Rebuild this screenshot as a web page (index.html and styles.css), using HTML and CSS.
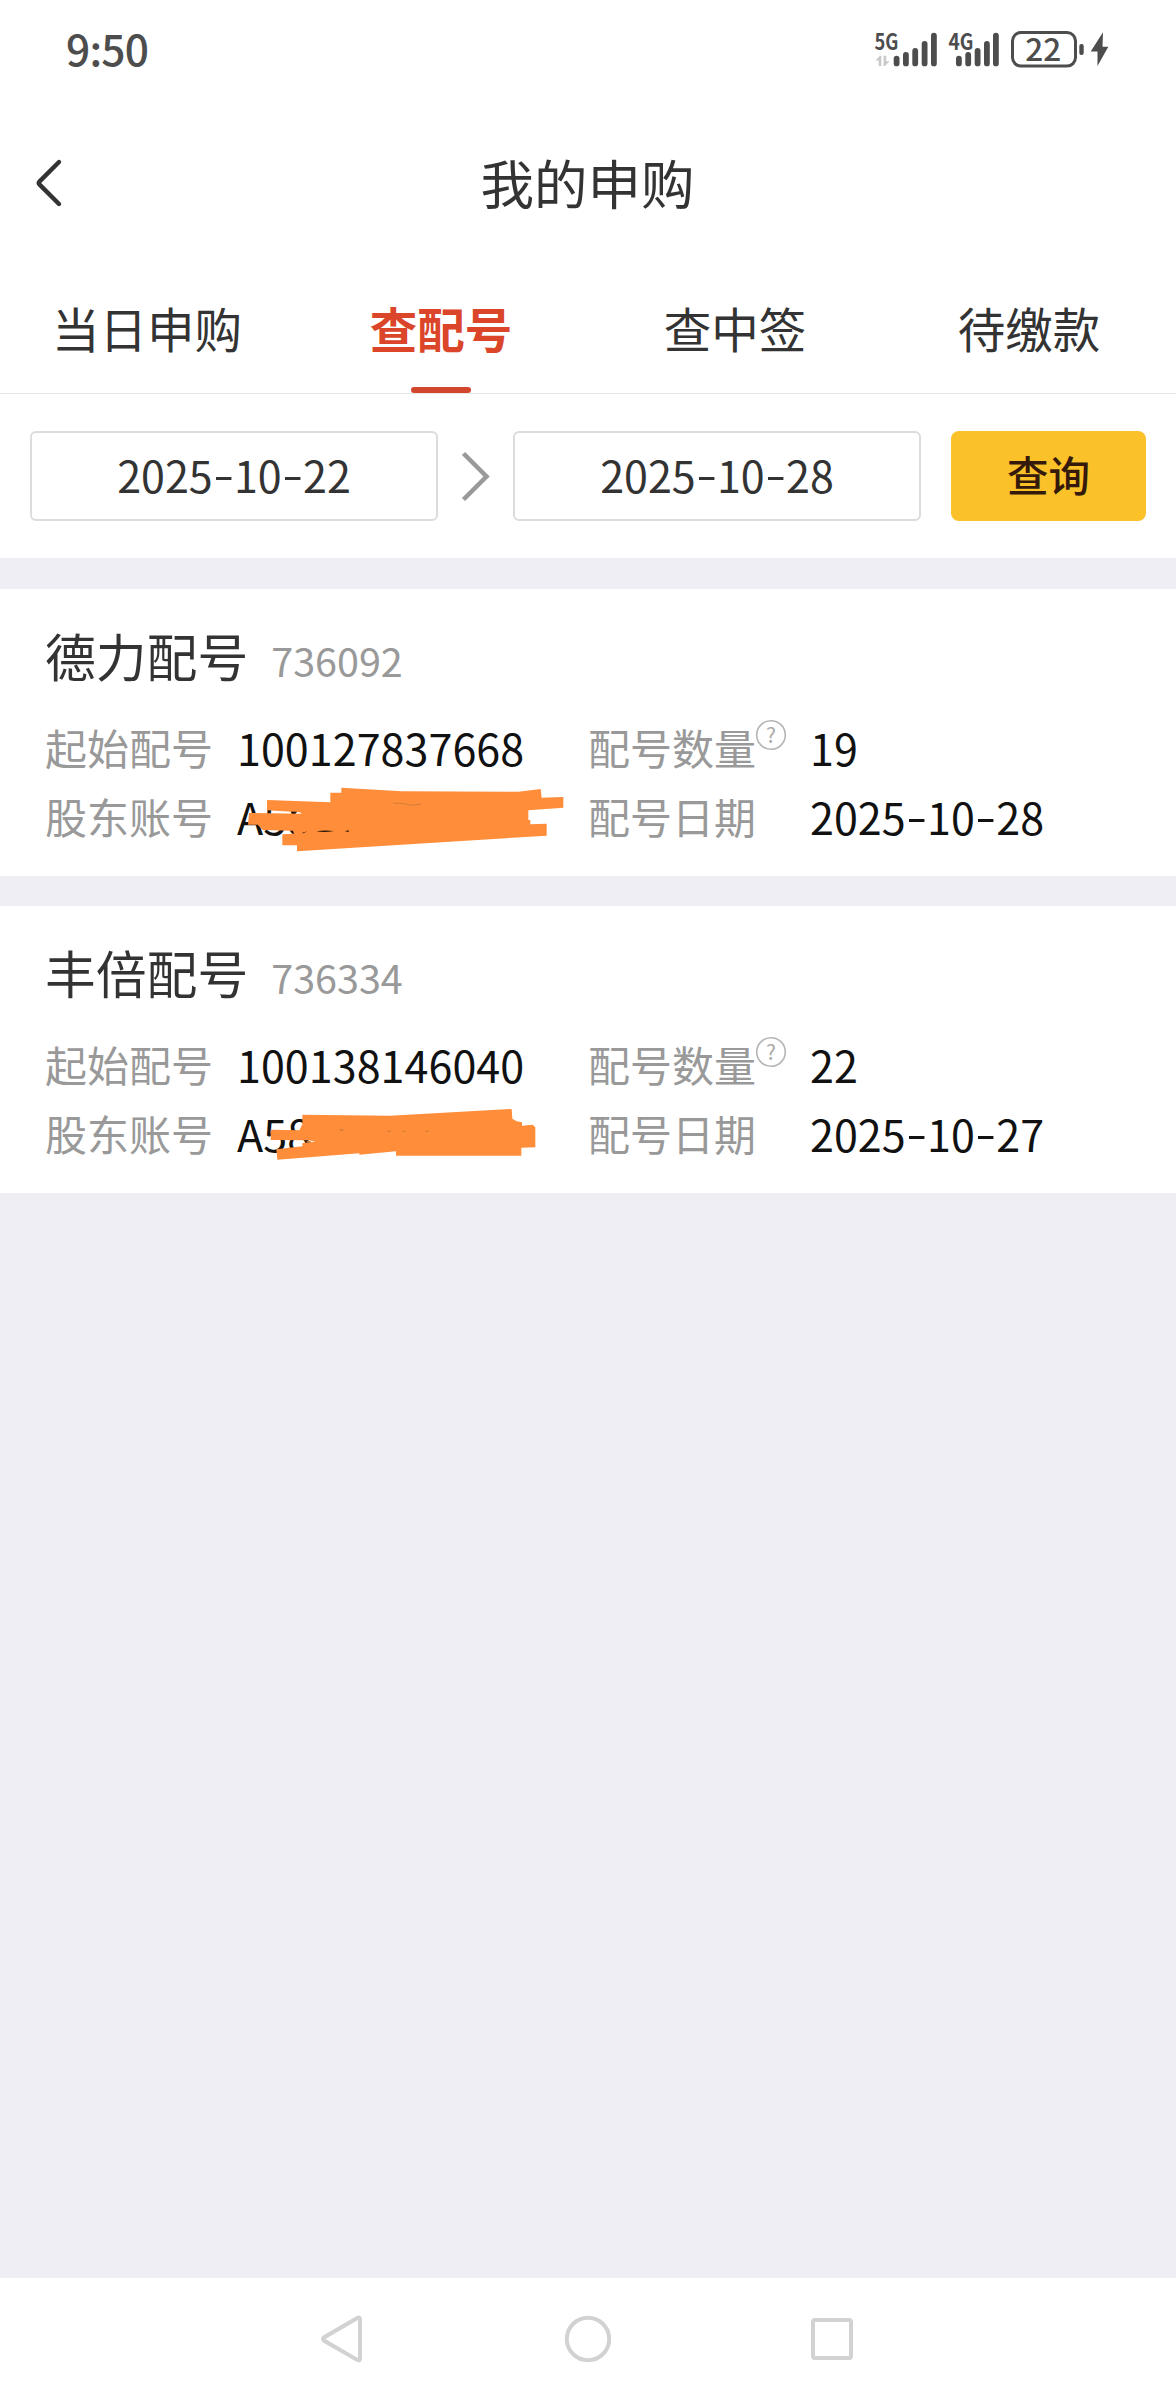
FILE: index.html
```html
<!DOCTYPE html>
<html lang="zh-CN">
<head>
<meta charset="utf-8">
<title>我的申购</title>
<link rel="stylesheet" href="styles.css">
</head>
<body>
<div class="screen">
  <div class="status">
    <span class="time">9:50</span>
    <svg class="status-icons" width="240" height="60" viewBox="872 20 240 60">
      <g fill="#4d4d4d">
        <text class="net" x="874.5" y="49.5" textLength="24" lengthAdjust="spacingAndGlyphs">5G</text>
        <rect x="893.7" y="55.7" width="5.8" height="10.6" rx="2.9"/>
        <rect x="903" y="52" width="5.8" height="14.3" rx="2.9"/>
        <rect x="912.3" y="48" width="5.8" height="18.3" rx="2.9"/>
        <rect x="921.7" y="41" width="5.8" height="25.3" rx="2.9"/>
        <rect x="931" y="32.7" width="5.8" height="33.6" rx="2.9"/>
        <text class="net" x="948.5" y="49.5" textLength="25" lengthAdjust="spacingAndGlyphs">4G</text>
        <rect x="956" y="55.7" width="5.8" height="10.6" rx="2.9"/>
        <rect x="965.3" y="52" width="5.8" height="14.3" rx="2.9"/>
        <rect x="974.7" y="48" width="5.8" height="18.3" rx="2.9"/>
        <rect x="984" y="41" width="5.8" height="25.3" rx="2.9"/>
        <rect x="993" y="32.7" width="5.8" height="33.6" rx="2.9"/>
        <rect x="1079.3" y="44" width="4.4" height="11" rx="2"/>
        <path d="M1103 32.3L1090.7 51.5H1097.5V66L1108.3 46.8H1102.5Z"/>
        <text class="charge" x="1043.3" y="60.7" text-anchor="middle">22</text>
      </g>
      <path d="M875.5 60.5L880 55.7H881.3V66H878.7V60.5ZM883.6 55.7H886.2V61.2H889.6L885 66H883.6Z" fill="#c9c9c9"/>
      <rect x="1012.5" y="32.5" width="63" height="33.6" rx="8.5" fill="none" stroke="#4d4d4d" stroke-width="3"/>
    </svg>
  </div>

  <header class="header">
    <svg class="back" width="30" height="50" viewBox="0 0 30 50"><path d="M26 4L6.4 23.6Q5 25 6.4 26.4L26 46"/></svg>
    <h1 class="title">我的申购</h1>
  </header>

  <nav class="tabs">
    <span class="tab">当日申购</span>
    <span class="tab active">查配号</span>
    <span class="tab">查中签</span>
    <span class="tab">待缴款</span>
  </nav>

  <section class="filter">
    <span class="date">2025<i class="dash">-</i>10<i class="dash">-</i>22</span>
    <svg class="arrow" width="75" height="60" viewBox="0 0 75 60"><path d="M25.5 7.5L48.5 30.5L25.5 53.5"/></svg>
    <span class="date">2025<i class="dash">-</i>10<i class="dash">-</i>28</span>
    <button class="query">查询</button>
  </section>

  <main class="list">
    <article class="card">
      <div class="name">德力配号<span class="code">736092</span></div>
      <div class="row">
        <span class="label">起始配号</span><span class="value">100127837668</span>
        <span class="label">配号数量<svg class="help" width="32" height="32" viewBox="0 0 32 32"><circle cx="16" cy="16" r="14.3"/><text x="16" y="23.5" text-anchor="middle">?</text></svg></span><span class="value">19</span>
      </div>
      <div class="row">
        <span class="label">股东账号</span><span class="value">A58<svg class="scribble first" width="360" height="100" viewBox="0 0 1080 300">
          <path fill="#ff8d3a" d="M364 53L545 64L895 65L962 57L965 83L1030 81V113L925 121V150H931V163L980 161V197L231 244V226L187 226V193L222 191L219 182L128 180L113 164H84L87 129L245 131L240 127L141 121V90L331 97V68H364Z"/>
          <path fill="#2b1608" d="M216 125H231L228 130H220ZM245 189L262 184L250 190ZM289 184Q315 179 342 183Q313 189 289 184ZM374 184L386 181V186Z"/>
          <path fill="none" stroke="#c97a38" stroke-width="2.5" d="M520 100Q555 99 566 105Q590 106 604 102"/>
        </svg></span>
        <span class="label">配号日期</span><span class="value">2025<i class="dash">-</i>10<i class="dash">-</i>28</span>
      </div>
    </article>

    <article class="card">
      <div class="name">丰倍配号<span class="code">736334</span></div>
      <div class="row">
        <span class="label">起始配号</span><span class="value">100138146040</span>
        <span class="label">配号数量<svg class="help" width="32" height="32" viewBox="0 0 32 32"><circle cx="16" cy="16" r="14.3"/><text x="16" y="23.5" text-anchor="middle">?</text></svg></span><span class="value">22</span>
      </div>
      <div class="row">
        <span class="label">股东账号</span><span class="value">A58<svg class="scribble second" width="360" height="90" viewBox="0 0 1080 270">
          <path fill="#ff8d3a" d="M247 74L510 77L875 57L877 86L890 94L906 97V107L938 104L946 112V172L904 173V197H528V184L418 194V190L172 209L169 178L247 169V159L287 155L265 151L152 150V119L238 121L247 103Z"/>
          <path fill="#c97a38" d="M259 153H272V158H263ZM357 118H370V122H361ZM502 122H513V125H502ZM549 122H557V125H549ZM617 122H626V125H617Z"/>
        </svg></span>
        <span class="label">配号日期</span><span class="value">2025<i class="dash">-</i>10<i class="dash">-</i>27</span>
      </div>
    </article>
  </main>

  <footer class="navbar">
    <svg width="48" height="52" viewBox="318 2313 48 52"><path d="M357.8 2317.8L323.9 2337.4Q322.5 2339 323.9 2340.6L357.8 2360.2Q360 2361 360 2358.5V2319.5Q360 2317 357.8 2317.8Z"/></svg>
    <svg width="48" height="52" viewBox="563 2313 48 52"><circle cx="588" cy="2339" r="21.2"/></svg>
    <svg width="48" height="52" viewBox="808 2313 48 52"><rect x="813" y="2320" width="38" height="38" rx="2"/></svg>
  </footer>
</div>
</body>
</html>
```
FILE: styles.css
```css
* { box-sizing: border-box; }

body {
  margin: 0;
  background: #efeef4;
  color: #333;
  font-family: "Noto Sans CJK SC", "Noto Sans", sans-serif;
}

.screen {
  width: 1176px;
  height: 2400px;
  display: flex;
  flex-direction: column;
}

.status {
  height: 98px;
  padding: 0 64px 3px 66px;
  display: flex;
  align-items: center;
  justify-content: space-between;
  background: #fff;
}

.time {
  font-size: 42.5px;
  font-weight: 500;
  line-height: 60px;
  letter-spacing: -0.8px;
  color: #4d4d4d;
}

.status-icons { margin-top: 5px; overflow: visible; }
.net { font-size: 22.5px; font-weight: 700; }
.charge { font-size: 31.5px; font-weight: 500; }

.header {
  height: 164px;
  padding: 3px 34px 0 33px;
  display: grid;
  grid-template-columns: 30px 1fr 30px;
  align-items: center;
  background: #fff;
}

.back {
  margin-top: 3px;
  fill: none;
  stroke: #333;
  stroke-width: 4.4;
  stroke-linecap: round;
}

.title {
  margin: 0;
  font-size: 53.5px;
  font-weight: 400;
  line-height: 80px;
  text-align: center;
}

.tabs {
  height: 132px;
  display: grid;
  grid-template-columns: repeat(4, 1fr);
  background: #fff;
  border-bottom: 1px solid #e6e6e6;
}

.tab {
  position: relative;
  font-size: 47.5px;
  line-height: 131px;
  text-align: center;
}

.tab.active {
  color: #db4529;
  font-weight: 700;
}

.tab.active::after {
  content: "";
  position: absolute;
  left: 117px;
  bottom: 0;
  width: 60px;
  height: 6px;
  border-radius: 3px;
  background: #d3462e;
}

.filter {
  height: 164px;
  padding: 37px 30px;
  display: flex;
  background: #fff;
}

.date {
  width: 408px;
  height: 90px;
  border: 2px solid #dcdcdc;
  border-radius: 6px;
  font-size: 43px;
  line-height: 83px;
  text-align: center;
}

.dash {
  display: inline-block;
  width: 21.3px;
  font-style: normal;
  text-align: center;
  transform: translateY(-2px) scaleX(1.4);
}

.arrow {
  margin-top: 15px;
  fill: none;
  stroke: #999;
  stroke-width: 4.5;
}

.query {
  width: 195px;
  height: 90px;
  margin-left: 30px;
  padding: 0 0 5px;
  border: 0;
  border-radius: 8px;
  background: #fbc128;
  color: #35190b;
  font: 500 41.5px/60px "Noto Sans CJK SC", sans-serif;
}

.list {
  flex: 1;
  padding-top: 31px;
  display: flex;
  flex-direction: column;
  gap: 30px;
}

.card {
  height: 287px;
  padding: 9px 45px 27px;
  background: #fff;
}

.name {
  height: 113px;
  font-size: 50.8px;
  line-height: 114px;
}

.code {
  margin-left: 23px;
  font-size: 39.5px;
  line-height: 1;
  color: #999;
}

.row {
  height: 69px;
  display: grid;
  grid-template-columns: 192px 351px 222px 1fr;
  line-height: 72px;
  white-space: nowrap;
}

.label {
  position: relative;
  font-size: 42px;
  color: #999;
}

.value {
  position: relative;
  font-size: 43px;
  letter-spacing: 0.07px;
  color: #111;
}

.help {
  position: absolute;
  left: 167px;
  top: 8px;
}

.help circle { fill: none; stroke: #b5b5b5; stroke-width: 1.6; }
.help text { font-size: 21px; fill: #aaa; }

.scribble { position: absolute; left: -17px; }
.first { top: -10px; }
.second { top: -7px; }

.navbar {
  height: 122px;
  padding: 0 320px 0 318px;
  display: flex;
  align-items: center;
  justify-content: space-between;
  background: #fff;
}

.navbar svg {
  fill: none;
  stroke: #d2d2d2;
  stroke-width: 4;
}
```
